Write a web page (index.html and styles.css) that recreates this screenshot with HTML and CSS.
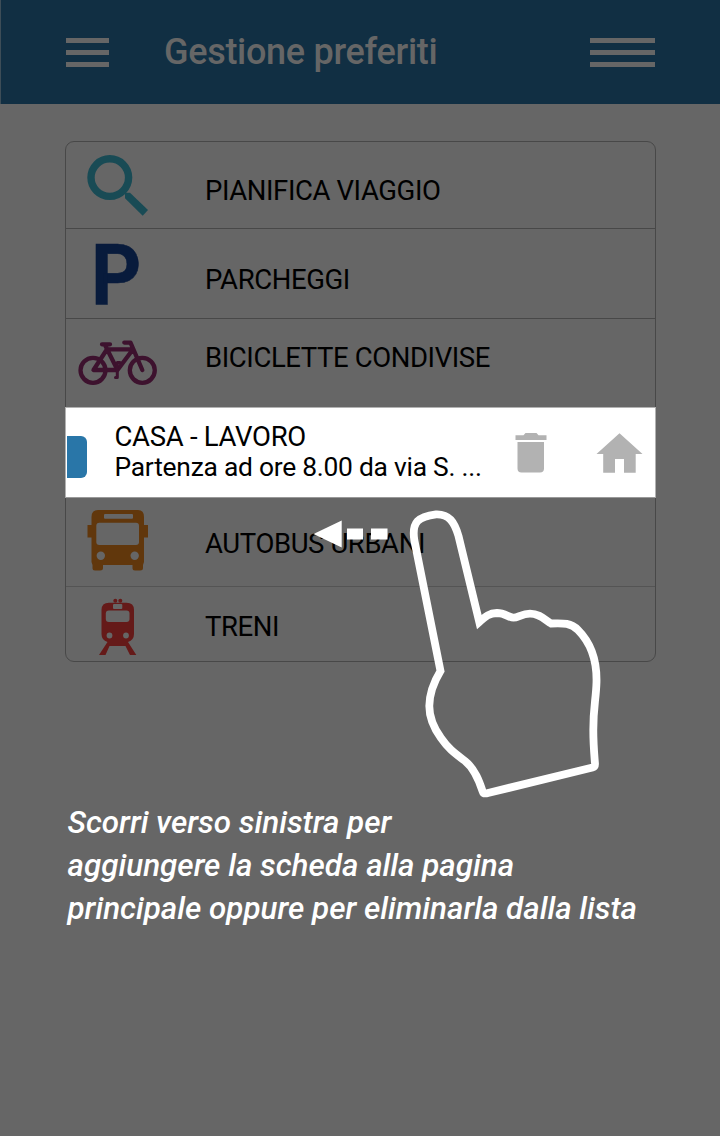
FILE: index.html
```html
<!DOCTYPE html>
<html lang="it">
<head>
<meta charset="utf-8">
<title>Gestione preferiti</title>
<link rel="stylesheet" href="styles.css">
</head>
<body>
<div class="screen">
  <header class="bar">
    <div class="menu"><i></i><i></i><i></i></div>
    <h1 class="title">Gestione preferiti</h1>
    <div class="menu menu-wide"><i></i><i></i><i></i></div>
  </header>

  <main class="card">
    <div class="row row-trip">
      <svg class="icon" viewBox="66 142 139 86">
        <circle cx="109.8" cy="177.6" r="18.8" fill="none" stroke="#194b55" stroke-width="7.4"/>
        <path fill="#194b55" d="M125 193.3 126.500 192.700H130L148 210 142.700 215.700 125 198.300Z"/>
      </svg>
      <span class="label">PIANIFICA VIAGGIO</span>
    </div>
    <div class="row row-park">
      <div class="icon park"><span>P</span></div>
      <span class="label">PARCHEGGI</span>
    </div>
    <div class="row row-bike">
      <svg class="icon" viewBox="66 319 139 88">
        <g fill="none" stroke="#3d122e" stroke-width="4.300" stroke-linecap="round" stroke-linejoin="round">
          <circle cx="93" cy="370.300" r="12.500"/>
          <circle cx="142.300" cy="370.300" r="12.500"/>
          <path d="M102 344.300H110M105.500 346 117.500 370M106.500 350 93.500 370H117.500L132.500 350M107 349.400H132M124.300 342.600H130.500L142.300 370"/>
          <path stroke-width="3" d="M120 362.500H117.300V377.500H115.500"/>
        </g>
      </svg>
      <span class="label">BICICLETTE CONDIVISE</span>
    </div>
    <div class="swiped">
      <div class="tab"></div>
      <div class="trip"><div class="name">CASA - LAVORO</div><div class="detail">Partenza ad ore 8.00 da via S. ...</div></div>
      <svg class="actions" viewBox="505 408 150 89">
        <g fill="#b2b2b2">
          <path d="M515.500 435.300H523.500L525.500 433H536.500L538.500 435.300H546.500V440H515.500ZM517.500 442H544V468.500Q544 472.500 540 472.500H521.500Q517.500 472.500 517.500 468.500Z"/>
          <path d="M619.500 433.300 642.500 454H635.700V472.700H624V459H615V472.700H603.200V454H596.500Z"/>
        </g>
      </svg>
    </div>
    <div class="row row-bus">
      <svg class="icon" viewBox="66 498 139 88">
        <path fill="#61370c" d="M98 510H138Q144 510 144 517V525H148V537.500H144V562L143 565V568Q143 570.500 140 570.500H135Q132.500 570.500 132.500 568V565H103V568Q103 570.500 100 570.500H95Q92.500 570.500 92.500 568V565L91.500 562V537.500H87.500V525H91.500V517Q91.500 510 98 510Z"/>
        <g fill="#666"><rect x="104" y="514" width="29" height="4.800" rx="1"/><rect x="96.300" y="522.800" width="42.700" height="22.200" rx="3"/><circle cx="100.800" cy="555.700" r="4.200"/><circle cx="134.700" cy="555.700" r="4.200"/></g>
      </svg>
      <span class="label">AUTOBUS URBANI</span>
    </div>
    <div class="row row-train">
      <svg class="icon" viewBox="66 587 139 74">
        <g fill="#651a19">
          <circle cx="115.300" cy="600.800" r="2"/><circle cx="120.300" cy="600.800" r="2"/>
          <path d="M109 602.800H126.500Q134 602.800 134 610V634Q134 640 128 642L136.300 655H130L125.500 646H109.500L105.500 655H99L107.500 642Q101.500 640 101.500 634V610Q101.500 602.800 109 602.800Z"/>
        </g>
        <g fill="#666"><rect x="113" y="604" width="9.300" height="5" rx="1"/><rect x="105.800" y="610.500" width="23.700" height="11.500" rx="3"/><circle cx="109.500" cy="635.500" r="2.900"/><circle cx="126" cy="635.500" r="2.900"/></g>
      </svg>
      <span class="label">TRENI</span>
    </div>
  </main>

  <p class="hint">Scorri verso sinistra per<br>aggiungere la scheda alla pagina<br>principale oppure per eliminarla dalla lista</p>

  <svg class="gesture" viewBox="300 500 310 310">
    <path fill="#fff" d="M313.500 534 341.700 520.500V547.500ZM347 528.500H363V539.500H347ZM371 528.500H387.500V539.500H371Z"/>
    <path fill="none" stroke="#fff" stroke-width="7.800" stroke-linejoin="miter" stroke-miterlimit="2" d="M440.500 671 414.300 540C411.500 522 418.500 516.500 436 514.300C449 513.800 454.500 522 458.500 536L479.300 622C484.500 617.500 488 613.300 497 613C505 613 509 617.700 513.500 617.700C518 617.700 522 613.700 530 613.700C540 613.700 545 620 551 623.500C564 623 571 623 578 630C590 642 597 658 596.500 682C596 700 593.300 706 593.300 730C593.300 745 594.500 757 595 764Q595 766.800 592.500 767.500L488 793Q483.500 794.300 482.500 791C479.500 782 475 769 465 761C453 752 448 748 441 738C433 727 429.300 718 429.300 706C429.500 691 435 680 440.500 671Z"/>
  </svg>
</div>
</body>
</html>
```
FILE: styles.css
```css
* { box-sizing: border-box; }
body { margin: 0; background: #666; font-family: Roboto, "Liberation Sans", sans-serif; }
.screen { position: relative; width: 720px; height: 1136px; overflow: hidden; }
.bar { height: 104px; padding: 0 65px; display: flex; align-items: center; background: #112f43; border-left: 1px solid #3d4d57; }
.menu { width: 43px; height: 29px; display: flex; flex-direction: column; justify-content: space-between; }
.menu i { height: 5px; background: #666; }
.menu-wide { width: 65px; margin-left: auto; }
.title { margin: 0 0 0 55px; font-size: 36px; font-weight: 500; line-height: 42px; letter-spacing: -0.3px; color: #666; white-space: nowrap; }
.card { width: 591px; height: 521px; margin: 37px 0 0 65px; border: 1px solid #484848; border-radius: 9px; display: flex; flex-direction: column; }
.row { display: flex; align-items: flex-start; border-bottom: 1px solid #484848; }
.icon { flex: none; width: 139px; height: 100%; display: block; }
.label { font-size: 27.5px; line-height: 32px; letter-spacing: -0.4px; color: #000; white-space: nowrap; }
.row-trip { height: 87px; } .row-trip .label { margin-top: 33px; }
.row-park { height: 90px; } .row-park .label { margin-top: 35px; }
.row-bike { height: 88px; border: 0; } .row-bike .label { margin-top: 23px; }
.row-bus { height: 89px; border-color: #545454; } .row-bus .label { margin-top: 30px; }
.row-train { height: 74px; border: 0; } .row-train .label { margin-top: 24px; }
.park { padding-left: 25.4px; font-size: 85px; line-height: 95px; font-weight: 700; color: #081b3c; }
.park span { display: inline-block; transform: scaleX(0.92); transform-origin: left; -webkit-text-stroke: 0.5px #081b3c; }
.swiped { height: 91px; margin: 0 -1px; padding-left: 1px; display: flex; align-items: center; background: #fff; border: 1px solid #b2b2b2; border-bottom-color: #999; }
.tab { flex: none; width: 19.5px; height: 42px; margin-top: 9px; background: #2976a8; border-radius: 0 6px 6px 0; }
.trip { flex: 1; min-width: 0; margin-left: 28px; padding-bottom: 1px; font-size: 27.5px; line-height: 31px; color: #000; white-space: nowrap; }
.name { letter-spacing: -0.3px; }
.detail { font-size: 26.4px; letter-spacing: -0.25px; }
.actions { flex: none; width: 150px; height: 89px; }
.hint { margin: 139px 0 0 67.5px; font-size: 31.4px; font-style: italic; font-weight: 500; line-height: 43px; color: #fff; white-space: nowrap; }
.gesture { position: absolute; left: 300px; top: 500px; width: 310px; height: 310px; }
```
